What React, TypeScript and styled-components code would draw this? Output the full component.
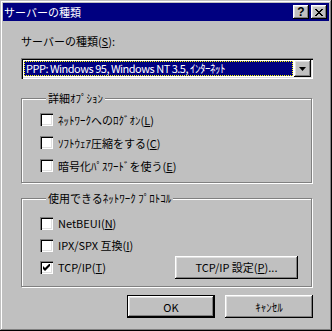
import React from 'react';
import styled, { createGlobalStyle } from 'styled-components';

const GlobalStyle = createGlobalStyle`
  html, body {
    margin: 0;
    padding: 0;
    background: #c0c0c0;
  }
  body {
    font-family: "Noto Sans CJK JP", "Liberation Sans", sans-serif;
    font-size: 11px;
    color: #000;
  }
`;

const raised = 'inset -1px -1px #000, inset 1px 1px #fff, inset -2px -2px #808080, inset 2px 2px #dfdfdf';
const sunken = 'inset 1px 1px #808080, inset 2px 2px #000, inset -1px -1px #fff, inset -2px -2px #dfdfdf';

const Window = styled.div`
  width: 332px;
  height: 331px;
  box-sizing: border-box;
  padding: 3px;
  background: #c0c0c0;
  box-shadow: inset -1px -1px #000, inset 1px 1px #c0c0c0, inset -2px -2px #808080, inset 2px 2px #fff;
  display: flex;
  flex-direction: column;
`;

const TitleBar = styled.div`
  height: 18px;
  background: #000080;
  color: #fff;
  display: flex;
  align-items: center;
  gap: 2px;
  padding: 0 2px 0 1px;
`;

const Title = styled.span`
  flex: 1;
  font-size: 11px;
  line-height: 18px;
  white-space: nowrap;
`;

const CaptionButton = styled.div`
  width: 16px;
  height: 14px;
  background: #c0c0c0;
  box-shadow: ${raised};
  display: flex;
  align-items: center;
  justify-content: center;
  color: #000;
  font-family: "Liberation Sans", sans-serif;
  font-weight: bold;
  font-size: 12px;
  line-height: 14px;
`;

const Body = styled.div`
  display: flex;
  flex-direction: column;
  padding: 13px 16px 0 18px;
`;

const Label = styled.div`
  line-height: 14px;
  white-space: nowrap;
`;

const Combo = styled.div`
  margin-top: 10px;
  height: 21px;
  box-sizing: border-box;
  padding: 2px;
  background: #fff;
  box-shadow: ${sunken};
  display: flex;
`;

const ComboValue = styled.div`
  flex: 1;
  margin: 1px;
  padding-left: 2px;
  background: #000080;
  color: #fff;
  outline: 1px dotted #ffff00;
  outline-offset: -1px;
  line-height: 15px;
  letter-spacing: -0.5px;
  white-space: nowrap;
  overflow: hidden;
`;

const ComboArrow = styled.div`
  width: 17px;
  background: #c0c0c0;
  box-shadow: ${raised};
  display: flex;
  align-items: center;
  justify-content: center;
`;

const Group = styled.fieldset<{ $top: number; $pt: number; $pb: number }>`
  margin: ${(p) => p.$top}px 1px 0 0;
  padding: ${(p) => p.$pt}px 0 ${(p) => p.$pb}px 18px;
  border: 1px solid #808080;
  box-shadow: inset 1px 1px #fff, 1px 1px #fff;
  min-width: 0;
`;

const Legend = styled.legend`
  margin-left: 6px;
  padding: 0 2px;
  line-height: 14px;
  background: #c0c0c0;
  white-space: nowrap;
`;

const Row = styled.div<{ $h: number }>`
  height: ${(p) => p.$h}px;
  display: flex;
  align-items: center;
  justify-content: space-between;
  padding-right: 13px;
`;

const Check = styled.label`
  display: flex;
  align-items: center;
  gap: 5px;
  white-space: nowrap;
  line-height: 14px;
`;

const Box = styled.span`
  width: 13px;
  height: 13px;
  flex: none;
  background: #fff;
  box-shadow: ${sunken};
  display: flex;
  align-items: center;
  justify-content: center;
`;

const Button = styled.div<{ $w: number; $default?: boolean }>`
  width: ${(p) => p.$w}px;
  height: 23px;
  box-sizing: border-box;
  background: #c0c0c0;
  box-shadow: ${(p) =>
    p.$default
      ? 'inset 0 0 0 1px #000, inset -2px -2px #000, inset 2px 2px #fff, inset -3px -3px #808080, inset 3px 3px #dfdfdf'
      : raised};
  display: flex;
  align-items: center;
  justify-content: center;
  white-space: nowrap;
  line-height: 14px;
`;

const Footer = styled.div`
  margin-top: 8px;
  display: flex;
  justify-content: flex-end;
  gap: 10px;
`;

const CheckItem = ({ checked, children }: { checked?: boolean; children: React.ReactNode }) => (
  <Check>
    <Box>
      {checked && (
        <svg width="7" height="7" viewBox="0 0 7 7">
          <path d="M0 2L2 4L6 0L7 0L7 2L2 7L0 5Z" fill="#000" />
        </svg>
      )}
    </Box>
    <span>{children}</span>
  </Check>
);

export default function App() {
  return (
    <>
      <GlobalStyle />
      <Window>
        <TitleBar>
          <Title>サーバーの種類</Title>
          <CaptionButton>?</CaptionButton>
          <CaptionButton>
            <svg width="8" height="7" viewBox="0 0 8 7" shapeRendering="crispEdges">
              <path
                d="M0 0h2v1H0zM6 0h2v1H6zM1 1h2v1H1zM5 1h2v1H5zM2 2h4v1H2zM3 3h2v1H3zM2 4h4v1H2zM1 5h2v1H1zM5 5h2v1H5zM0 6h2v1H0zM6 6h2v1H6z"
                fill="#000"
              />
            </svg>
          </CaptionButton>
        </TitleBar>
        <Body>
          <Label>
            サーバーの種類(<u>S</u>):
          </Label>
          <Combo>
            <ComboValue>PPP: Windows 95, Windows NT 3.5, ｲﾝﾀｰﾈｯﾄ</ComboValue>
            <ComboArrow>
              <svg width="7" height="4" viewBox="0 0 7 4">
                <path d="M0 0H7L3.5 4Z" fill="#000" />
              </svg>
            </ComboArrow>
          </Combo>
          <Group $top={12} $pt={3} $pb={5}>
            <Legend>詳細ｵﾌﾟｼｮﾝ</Legend>
            <Row $h={23}>
              <CheckItem>
                ﾈｯﾄﾜｰｸへのﾛｸﾞｵﾝ(<u>L</u>)
              </CheckItem>
            </Row>
            <Row $h={23}>
              <CheckItem>
                ｿﾌﾄｳｪｱ圧縮をする(<u>C</u>)
              </CheckItem>
            </Row>
            <Row $h={23}>
              <CheckItem>
                暗号化ﾊﾟｽﾜｰﾄﾞを使う(<u>E</u>)
              </CheckItem>
            </Row>
          </Group>
          <Group $top={8} $pt={7} $pb={8}>
            <Legend>使用できるﾈｯﾄﾜｰｸ ﾌﾟﾛﾄｺﾙ</Legend>
            <Row $h={22}>
              <CheckItem>
                NetBEUI(<u>N</u>)
              </CheckItem>
            </Row>
            <Row $h={22}>
              <CheckItem>
                IPX/SPX 互換(<u>I</u>)
              </CheckItem>
            </Row>
            <Row $h={22}>
              <CheckItem checked>
                TCP/IP(<u>T</u>)
              </CheckItem>
              <Button $w={123}>
                TCP/IP 設定(<u>P</u>)...
              </Button>
            </Row>
          </Group>
          <Footer>
            <Button $w={88} $default>
              OK
            </Button>
            <Button $w={88}>ｷｬﾝｾﾙ</Button>
          </Footer>
        </Body>
      </Window>
    </>
  );
}
